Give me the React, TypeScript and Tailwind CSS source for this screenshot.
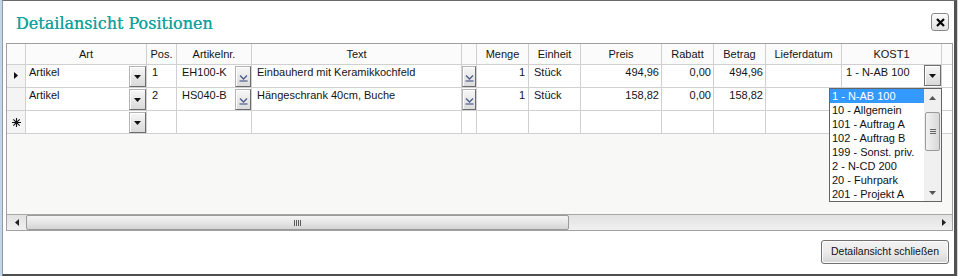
import type { ReactNode } from 'react'

const COLS =
  'grid grid-cols-[19px_121px_30px_75px_210px_15px_52px_52px_81px_52px_52px_76px_100px_10px]'

const HEADERS = ['', 'Art', 'Pos.', 'Artikelnr.', 'Text', '', 'Menge', 'Einheit', 'Preis', 'Rabatt', 'Betrag', 'Lieferdatum', 'KOST1', '']

const ROWS = [
  { pos: '1', nr: 'EH100-K', text: 'Einbauherd mit Keramikkochfeld', preis: '494,96', betrag: '494,96', kost: '1 - N-AB 100', current: true },
  { pos: '2', nr: 'HS040-B', text: 'Hängeschrank 40cm, Buche', preis: '158,82', betrag: '158,82', kost: '', current: false },
]

const KOST_ITEMS = [
  '1 - N-AB 100',
  '10 - Allgemein',
  '101 - Auftrag A',
  '102 - Auftrag B',
  '199 - Sonst. priv.',
  '2 - N-CD 200',
  '20 - Fuhrpark',
  '201 - Projekt A',
]

function Cell({ children, className = '', last = false }: { children?: ReactNode; className?: string; last?: boolean }) {
  return (
    <div className={`h-[23px] border-b border-[#d0d0d0] ${last ? '' : 'border-r'} overflow-hidden whitespace-nowrap pt-[1px] leading-[13px] ${className}`}>
      {children}
    </div>
  )
}

function ComboButton({ w = 'w-[17px]', dark = false }: { w?: string; dark?: boolean }) {
  return (
    <div
      className={`${w} h-[21px] shrink-0 flex items-center justify-center bg-gradient-to-b from-[#f7f7f7] to-[#d9d9d9] border ${
        dark ? 'border-[#6f6f6f]' : 'border-[#b4b4b4] border-r-[#6c6c6c] border-b-[#6c6c6c]'
      } shadow-[inset_1px_1px_0_#ffffff]`}
    >
      <svg width="7" height="4" viewBox="0 0 7 4">
        <path d="M0 0h7L3.5 4z" fill="#111" />
      </svg>
    </div>
  )
}

function LookupButton({ w = 'w-[16px]' }: { w?: string }) {
  return (
    <div
      className={`${w} h-[21px] shrink-0 flex items-center justify-center bg-gradient-to-b from-[#f7f7f7] to-[#dcdcdc] border border-[#b4b4b4] border-r-[#6c6c6c] border-b-[#6c6c6c] shadow-[inset_1px_1px_0_#ffffff]`}
    >
      <svg width="9" height="8" viewBox="0 0 9 8" className="mt-[2px]">
        <path d="M1 1.5l3.5 3.5L8 1.5" stroke="#4c5d8c" strokeWidth="1.3" fill="none" />
        <path d="M0.5 7h8" stroke="#4c5d8c" strokeWidth="1.2" />
      </svg>
    </div>
  )
}

function DropList() {
  return (
    <div className="absolute left-[822px] top-[44px] w-[113px] h-[114px] border border-[#646464] bg-white flex">
      <div className="flex-1 flex flex-col">
        {KOST_ITEMS.map((k, i) => (
          <div
            key={k}
            className={`h-[14px] leading-[14px] pl-[2px] whitespace-nowrap ${i === 0 ? 'bg-[#3399ff] text-white' : 'text-[#111]'}`}
          >
            {k}
          </div>
        ))}
      </div>
      <div className="w-[17px] bg-[#f0f0f0] flex flex-col items-center">
        <div className="h-[17px] flex items-center justify-center">
          <svg width="7" height="4" viewBox="0 0 7 4">
            <path d="M3.5 0L7 4H0z" fill="#555" />
          </svg>
        </div>
        <div className="mt-[6px] w-[15px] h-[39px] rounded-[2px] border border-[#9b9b9b] bg-gradient-to-r from-[#f2f2f2] to-[#d8d8d8] flex flex-col items-center justify-center gap-[1px]">
          <div className="w-[6px] h-px bg-[#666]" />
          <div className="w-[6px] h-px bg-[#666]" />
          <div className="w-[6px] h-px bg-[#666]" />
        </div>
        <div className="flex-1" />
        <div className="h-[17px] flex items-center justify-center">
          <svg width="7" height="4" viewBox="0 0 7 4">
            <path d="M0 0h7L3.5 4z" fill="#555" />
          </svg>
        </div>
      </div>
    </div>
  )
}

function HScroll() {
  return (
    <div className="h-[16px] border-t border-[#a8a8a8] bg-gradient-to-b from-[#e2e2e2] to-[#f0f0f0] flex items-stretch">
      <div className="w-[19px] flex items-center justify-center">
        <svg width="4" height="7" viewBox="0 0 4 7">
          <path d="M4 0v7L0 3.5z" fill="#222" />
        </svg>
      </div>
      <div className="w-[543px] rounded-[2px] border border-[#9a9a9a] bg-gradient-to-b from-[#f4f4f4] via-[#e6e6e6] to-[#d4d4d4] flex items-center justify-center gap-[1px]">
        <div className="w-px h-[6px] bg-[#5a5a5a]" />
        <div className="w-px h-[6px] bg-[#5a5a5a]" />
        <div className="w-px h-[6px] bg-[#5a5a5a]" />
        <div className="w-px h-[6px] bg-[#5a5a5a]" />
      </div>
      <div className="flex-1" />
      <div className="w-[17px] flex items-center justify-center">
        <svg width="4" height="7" viewBox="0 0 4 7">
          <path d="M0 0v7l4-3.5z" fill="#222" />
        </svg>
      </div>
    </div>
  )
}

export default function App() {
  return (
    <div className="w-[958px] h-[276px] flex bg-white font-['Liberation_Sans',Arial,sans-serif] text-[11px] text-[#141414]">
      <div className="w-[2px] bg-[#c2d5ea]" />
      <div className="flex-1 flex flex-col border-l border-l-[#9a9a9a] border-t border-t-[#6a6a6a] border-r-[3px] border-r-[#525252] border-b-2 border-b-[#4e4e4e]">
        {/* title bar */}
        <div className="h-[42px] flex justify-between">
          <h1 className="pt-[15px] pl-[13px] font-['DejaVu_Serif',serif] text-[16px] leading-[16px] text-[#16a29e] [text-shadow:0_0_0.4px_#16a29e]">
            Detailansicht Positionen
          </h1>
          <button className="mt-[12px] mr-[5px] w-[18px] h-[18px] rounded-[3px] border border-[#8a8a8a] bg-gradient-to-b from-[#fafafa] to-[#e2e2e2] flex items-center justify-center">
            <svg width="9" height="9" viewBox="0 0 9 9">
              <path d="M1 1l7 7M8 1L1 8" stroke="#000" strokeWidth="2.2" />
            </svg>
          </button>
        </div>

        {/* grid */}
        <div className="pl-[3px] pr-[1px]">
          <div className="relative h-[188px] border border-[#a0a0a0] bg-[#f8f8f7] flex flex-col">
            <div className={`${COLS} bg-[#fbfbfb]`}>
              {HEADERS.map((h, i) => (
                <div
                  key={i}
                  className={`h-[21px] border-b border-[#d0d0d0] ${i === HEADERS.length - 1 ? '' : 'border-r'} flex items-center justify-center leading-[13px]`}
                >
                  {h}
                </div>
              ))}
            </div>

            {ROWS.map((r) => (
              <div key={r.pos} className={`${COLS} bg-white`}>
                <Cell className="bg-[#f4f4f4] flex items-center justify-center !pt-0">
                  {r.current && (
                    <svg width="4" height="7" viewBox="0 0 4 7" className="-mt-[2px]">
                      <path d="M0 0v7l4-3.5z" fill="#111" />
                    </svg>
                  )}
                </Cell>
                <Cell className="flex justify-between pl-[3px] !pt-0">
                  <span className="pt-[1px]">Artikel</span>
                  <div className="pt-[1px]">
                    <ComboButton />
                  </div>
                </Cell>
                <Cell className="pl-[5px]">{r.pos}</Cell>
                <Cell className="flex justify-between pl-[5px] !pt-0">
                  <span className="pt-[1px]">{r.nr}</span>
                  <div className="pt-[1px]">
                    <LookupButton />
                  </div>
                </Cell>
                <Cell className="pl-[5px]">{r.text}</Cell>
                <Cell className="!pt-0">
                  <div className="pt-[1px]">
                    <LookupButton w="w-[14px]" />
                  </div>
                </Cell>
                <Cell className="text-right pr-[3px]">1</Cell>
                <Cell className="pl-[5px]">Stück</Cell>
                <Cell className="text-right pr-[2px]">{r.preis}</Cell>
                <Cell className="text-right pr-[2px]">0,00</Cell>
                <Cell className="text-right pr-[2px]">{r.betrag}</Cell>
                <Cell />
                <Cell className="flex justify-between pl-[4px] !pt-0">
                  {r.kost && (
                    <>
                      <span className="pt-[1px]">{r.kost}</span>
                      <ComboButton dark />
                    </>
                  )}
                </Cell>
                <Cell last />
              </div>
            ))}

            {/* new row */}
            <div className={`${COLS} bg-white`}>
              <Cell className="bg-[#f4f4f4] flex items-center justify-center !pt-0">
                <svg width="9" height="9" viewBox="0 0 9 9">
                  <path d="M4.5 0v9M0 4.5h9M1.3 1.3l6.4 6.4M7.7 1.3L1.3 7.7" stroke="#111" strokeWidth="1.1" />
                </svg>
              </Cell>
              <Cell className="flex justify-end !pt-0">
                <div className="pt-[1px]">
                  <ComboButton />
                </div>
              </Cell>
              {Array.from({ length: 11 }).map((_, i) => (
                <Cell key={i} />
              ))}
              <Cell last />
            </div>

            <div className="flex-1" />
            <HScroll />

            <DropList />
          </div>
        </div>

        {/* footer */}
        <div className="flex justify-end pt-[9px] pr-[5px]">
          <button className="w-[128px] h-[24px] rounded-[3px] border border-[#707070] bg-gradient-to-b from-[#f2f2f2] via-[#ebebeb] to-[#d6d6d6] text-[10.5px] text-[#111] shadow-[inset_0_0_0_1px_#fcfcfc]">
            Detailansicht schließen
          </button>
        </div>
      </div>
      <div className="w-px bg-[#d8d8d8]" />
    </div>
  )
}
